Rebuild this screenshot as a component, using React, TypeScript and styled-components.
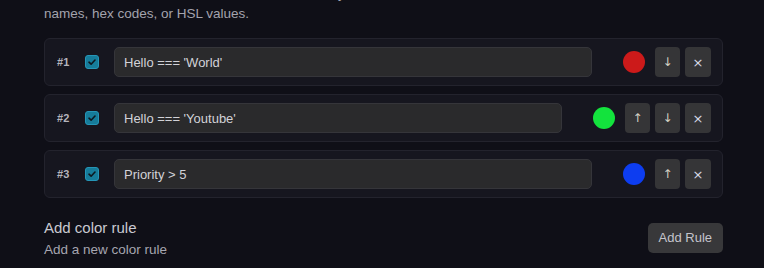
import React from "react";
import styled, { createGlobalStyle } from "styled-components";

const GlobalStyle = createGlobalStyle`
    html, body {
        margin: 0;
        padding: 0;
        background: #0f0f17;
        overflow: hidden;
    }
    body {
        font-family: "Liberation Sans", Arial, sans-serif;
        color: #c8c8d0;
    }
`;

const Panel = styled.div`
    width: 679px;
    margin-left: 44px;
`;

const Intro = styled.p`
    margin: -16px 0 14px;
    font-size: 13.5px;
    line-height: 20px;
    color: #a3a3ad;
    white-space: nowrap;
`;

const RuleList = styled.div`
    display: flex;
    flex-direction: column;
    gap: 8px;
`;

const RuleCard = styled.div`
    display: flex;
    align-items: center;
    height: 48px;
    box-sizing: border-box;
    padding: 0 11px 0 12px;
    background: #16161f;
    border: 1px solid #23232d;
    border-radius: 6px;
`;

const Index = styled.span`
    width: 28px;
    font-size: 11px;
    font-weight: bold;
    color: #b4b4bc;
`;

const Check = styled.span`
    display: inline-flex;
    align-items: center;
    justify-content: center;
    width: 14px;
    height: 14px;
    box-sizing: border-box;
    border-radius: 3px;
    background: #167c9a;
    border: 1px solid #2596b8;
    margin-right: 15px;
`;

const Condition = styled.input`
    flex: 1;
    min-width: 0;
    height: 30px;
    box-sizing: border-box;
    padding: 0 9px;
    background: #2a2a2c;
    border: 1px solid #35353a;
    border-radius: 5px;
    color: #d2d2d8;
    font-family: "Liberation Sans", Arial, sans-serif;
    font-size: 13px;
    outline: none;
`;

const Swatch = styled.span<{ $color: string }>`
    width: 22px;
    height: 22px;
    border-radius: 50%;
    background: ${(p) => p.$color};
    margin: 0 10px 0 31px;
    flex-shrink: 0;
`;

const Actions = styled.div`
    display: flex;
    gap: 5px;
`;

const IconButton = styled.button`
    width: 25px;
    height: 30px;
    padding: 0;
    border: none;
    border-radius: 4px;
    background: #353537;
    color: #d4d0c4;
    font-family: "DejaVu Sans", sans-serif;
    font-size: 12px;
    display: flex;
    align-items: center;
    justify-content: center;
    cursor: pointer;
`;

const CloseButton = styled(IconButton)`
    width: 26px;
    color: #d6dae4;
    font-size: 13px;
`;

const Footer = styled.div`
    display: flex;
    justify-content: space-between;
    align-items: center;
    margin-top: 16px;
`;

const FooterText = styled.div`
    display: flex;
    flex-direction: column;
    gap: 3px;
    padding-top: 4px;
`;

const FooterTitle = styled.span`
    font-size: 15px;
    line-height: 20px;
    color: #c9c9d1;
`;

const FooterHint = styled.span`
    font-size: 13.5px;
    line-height: 18px;
    color: #a6a6b0;
`;

const AddButton = styled.button`
    height: 30px;
    padding: 0 11px;
    border: none;
    border-radius: 5px;
    background: #38383a;
    color: #c4c4cc;
    font-family: "Liberation Sans", Arial, sans-serif;
    font-size: 13px;
    cursor: pointer;
    margin-top: 2px;
`;

type Rule = { condition: string; color: string };

const rules: Rule[] = [
    { condition: "Hello === 'World'", color: "#cc1a1a" },
    { condition: "Hello === 'Youtube'", color: "#13e33d" },
    { condition: "Priority > 5", color: "#0d3df0" },
];

function CheckMark() {
    return (
        <svg width="10" height="10" viewBox="0 0 10 10">
            <path
                d="M2 5.2 L4.1 7.2 L8 3"
                fill="none"
                stroke="#0d1820"
                strokeWidth="1.6"
                strokeLinecap="round"
                strokeLinejoin="round"
            />
        </svg>
    );
}

function App() {
    return (
        <>
            <GlobalStyle />
            <Panel>
                <Intro>
                    The first rule that matches a row sets its color. Any CSS
                    color works, such as color
                    <br />
                    names, hex codes, or HSL values.
                </Intro>
                <RuleList>
                    {rules.map((rule, i) => (
                        <RuleCard key={i}>
                            <Index>#{i + 1}</Index>
                            <Check>
                                <CheckMark />
                            </Check>
                            <Condition defaultValue={rule.condition} />
                            <Swatch $color={rule.color} />
                            <Actions>
                                {i > 0 && <IconButton>↑</IconButton>}
                                {i < rules.length - 1 && (
                                    <IconButton>↓</IconButton>
                                )}
                                <CloseButton>×</CloseButton>
                            </Actions>
                        </RuleCard>
                    ))}
                </RuleList>
                <Footer>
                    <FooterText>
                        <FooterTitle>Add color rule</FooterTitle>
                        <FooterHint>Add a new color rule</FooterHint>
                    </FooterText>
                    <AddButton>Add Rule</AddButton>
                </Footer>
            </Panel>
        </>
    );
}

export default App;
